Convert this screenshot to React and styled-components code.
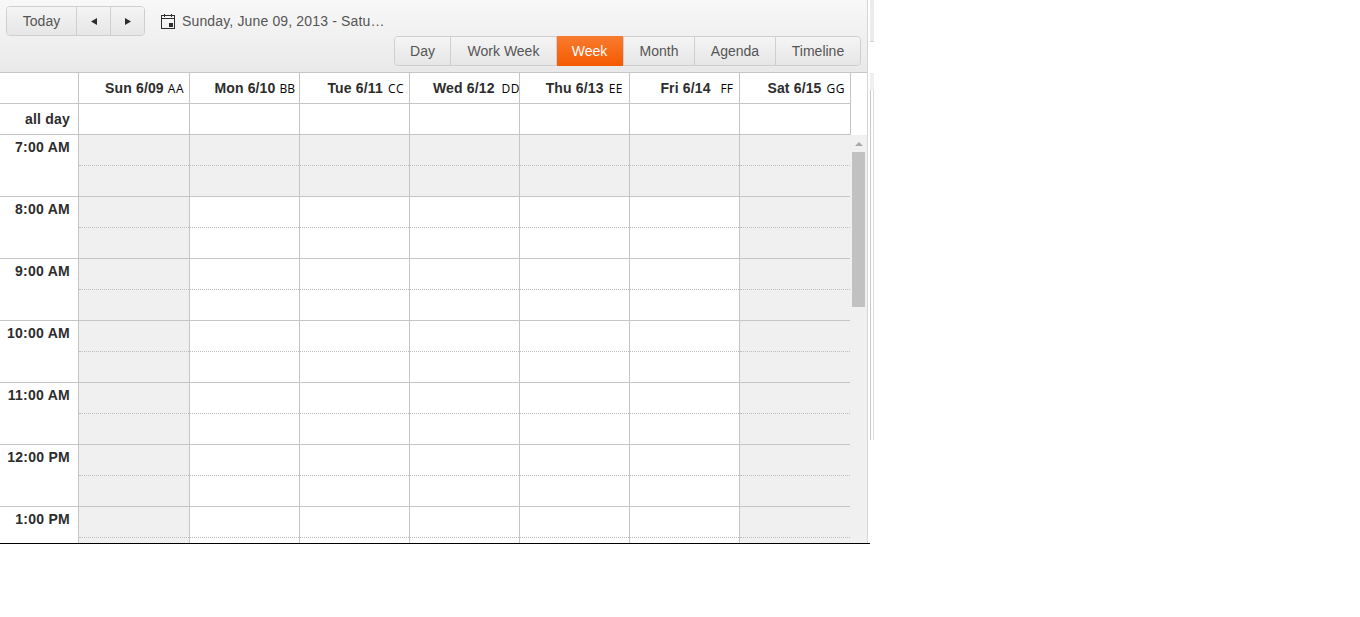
import React from "react";
import styled, { createGlobalStyle } from "styled-components";

const days = [
  { label: "Sun 6/09", res: "AA", pad: 5, gap: 4, track: 0.5 },
  { label: "Mon 6/10", res: "BB", pad: 4, gap: 4, track: 0 },
  { label: "Tue 6/11", res: "CC", pad: 5, gap: 5, track: 0.5 },
  { label: "Wed 6/12", res: "DD", pad: -1, gap: 7, track: 0.5 },
  { label: "Thu 6/13", res: "EE", pad: 6, gap: 5, track: 0.5 },
  { label: "Fri 6/14", res: "FF", pad: 6, gap: 10, track: 0 },
  { label: "Sat 6/15", res: "GG", pad: 5, gap: 5, track: 0.5 },
];
const hours = ["7:00 AM", "8:00 AM", "9:00 AM", "10:00 AM", "11:00 AM", "12:00 PM", "1:00 PM"];
const views = [
  { name: "Day", w: 55 },
  { name: "Work Week", w: 106 },
  { name: "Week", w: 67 },
  { name: "Month", w: 71 },
  { name: "Agenda", w: 81 },
  { name: "Timeline", w: 85 },
];

const CalendarIcon = () => (
  <svg width="15" height="15" viewBox="0 0 15 15" fill="none">
    <rect x="0.5" y="1.5" width="13" height="13" stroke="#2d2d2d" />
    <path d="M1 4.5h12" stroke="#2d2d2d" />
    <path d="M3 0h1v3H3zM10 0h1v3h-1z" fill="#2d2d2d" />
    <path d="M8 9h4v4H8z" fill="#2d2d2d" />
  </svg>
);

const App = () => (
  <Page>
    <GlobalStyle />
    <Column>
      <Scheduler>
        <Toolbar>
          <TopRow>
            <NavGroup>
              <NavButton $w={69}>Today</NavButton>
              <NavButton $w={34}><Arrow viewBox="0 0 6 7"><path d="M6 0v7L0 3.5z" /></Arrow></NavButton>
              <NavButton $w={34}><Arrow viewBox="0 0 6 7"><path d="M0 0v7l6-3.5z" /></Arrow></NavButton>
            </NavGroup>
            <DateRange>
              <CalendarIcon />
              <DateText>Sunday, June 09, 2013 - Satu…</DateText>
            </DateRange>
          </TopRow>
          <ViewGroup>
            {views.map((v) => (
              <ViewButton key={v.name} $w={v.w} $active={v.name === "Week"}>{v.name}</ViewButton>
            ))}
          </ViewGroup>
        </Toolbar>
        <HeaderRow>
          <Corner />
          {days.map((d) => (
            <DayHead key={d.label}>
              <b>{d.label}</b>
              <Res $gap={d.gap} $pad={d.pad} $track={d.track}>{d.res}</Res>
            </DayHead>
          ))}
        </HeaderRow>
        <AllDayRow>
          <AllDayLabel>all day</AllDayLabel>
          {days.map((d) => <AllDayCell key={d.label} />)}
        </AllDayRow>
        <Body>
          <Grid>
            {hours.map((h, i) => (
              <HourRow key={h}>
                <HourLabel>{h}</HourLabel>
                {days.map((d, j) => (
                  <Slot key={d.label} $off={i === 0 || j === 0 || j === 6} />
                ))}
              </HourRow>
            ))}
          </Grid>
          <ScrollBar>
            <ScrollArrow />
            <ScrollThumb />
          </ScrollBar>
        </Body>
      </Scheduler>
      <BottomRule />
    </Column>
    <SideStrip>
      <StripCap />
      <StripGap />
      <StripFill />
      <StripRail />
    </SideStrip>
  </Page>
);

export default App;

const GlobalStyle = createGlobalStyle`
  html, body {
    margin: 0;
    padding: 0;
    background: #fff;
    overflow: hidden;
  }
  body {
    font-family: "Liberation Sans", Arial, sans-serif;
    font-size: 14px;
    color: #2d2d2d;
  }
`;
const Page = styled.div`
  display: flex;
  align-items: flex-start;
  width: 1360px;
  height: 617px;
`;
const Column = styled.div`
  width: 870px;
  flex-shrink: 0;
`;
const Scheduler = styled.div`
  width: 868px;
  height: 543px;
  box-sizing: border-box;
  border-right: 1px solid #d5d5d5;
  overflow: hidden;
  display: flex;
  flex-direction: column;
`;
const BottomRule = styled.div`
  height: 1px;
  background: #000;
`;
const SideStrip = styled.div`
  width: 4px;
  height: 440px;
  display: flex;
  flex-direction: column;
  flex-shrink: 0;
`;
const StripCap = styled.div`
  height: 42px;
  box-sizing: border-box;
  background: #ececec;
  border-bottom: 1px solid #d5d5d5;
`;
const StripGap = styled.div`
  height: 31px;
`;
const StripFill = styled.div`
  height: 17px;
  background: #efefef;
`;
const StripRail = styled.div`
  flex: 1;
  border-left: 1px solid #c8c8c8;
  border-right: 1px solid #dcdcdc;
`;
const Toolbar = styled.div`
  height: 73px;
  box-sizing: border-box;
  border-bottom: 1px solid #c5c5c5;
  background: linear-gradient(to bottom, #f8f8f8, #e9e9e9);
  padding: 6px 6px 0;
  display: flex;
  flex-direction: column;
`;
const TopRow = styled.div`
  display: flex;
  align-items: center;
  height: 30px;
`;
const NavGroup = styled.div`
  display: flex;
  height: 30px;
  box-sizing: border-box;
  border: 1px solid #cfcfcf;
  border-radius: 4px;
  overflow: hidden;
`;
const NavButton = styled.div`
  width: ${(p) => p.$w}px;
  box-sizing: border-box;
  display: flex;
  align-items: center;
  justify-content: center;
  background: linear-gradient(to bottom, #f4f4f4, #e6e6e6);
  color: #555;
  & + & {
    border-left: 1px solid #cfcfcf;
  }
`;
const Arrow = styled.svg`
  width: 6px;
  height: 7px;
  fill: #2d2d2d;
`;
const DateRange = styled.div`
  display: flex;
  align-items: center;
  margin-left: 16px;
  gap: 6px;
`;
const DateText = styled.span`
  color: #555;
  letter-spacing: 0.15px;
  white-space: nowrap;
`;
const ViewGroup = styled.div`
  display: flex;
  align-self: flex-end;
  height: 30px;
  box-sizing: border-box;
  border: 1px solid #cfcfcf;
  border-radius: 4px;
`;
const ViewButton = styled.div`
  width: ${(p) => p.$w}px;
  box-sizing: border-box;
  text-align: center;
  line-height: ${(p) => (p.$active ? "30px" : "28px")};
  color: ${(p) => (p.$active ? "#fff" : "#555")};
  background: ${(p) =>
    p.$active
      ? "linear-gradient(to bottom, #fa7b2f, #f45a00)"
      : "linear-gradient(to bottom, #f4f4f4, #e6e6e6)"};
  margin: ${(p) => (p.$active ? "-1px 0" : "0")};
  padding-right: ${(p) => (p.$active ? "1px" : "0")};
  & + & {
    border-left: 1px solid ${(p) => (p.$active ? "#fa7b2f" : "#cfcfcf")};
  }
  &:first-child {
    border-radius: 3px 0 0 3px;
  }
  &:last-child {
    border-radius: 0 3px 3px 0;
  }
`;
const HeaderRow = styled.div`
  display: flex;
  width: 851px;
  height: 31px;
  box-sizing: border-box;
  border-bottom: 1px solid #c5c5c5;
`;
const Corner = styled.div`
  width: 78px;
  flex-shrink: 0;
`;
const DayHead = styled.div`
  width: 110px;
  box-sizing: border-box;
  flex-shrink: 0;
  display: flex;
  align-items: center;
  justify-content: flex-end;
  border-left: 1px solid #c5c5c5;
  white-space: nowrap;
  &:nth-child(2) {
    width: 111px;
  }
  &:last-child {
    width: 112px;
    border-right: 1px solid #c5c5c5;
  }
  b {
    color: #2d2d2d;
    letter-spacing: 0.15px;
  }
`;
const Res = styled.span`
  margin-left: ${(p) => p.$gap}px;
  margin-right: ${(p) => p.$pad}px;
  font-family: "Open Sans", sans-serif;
  font-size: 12px;
  letter-spacing: ${(p) => p.$track}px;
  color: #000;
`;
const AllDayRow = styled.div`
  display: flex;
  width: 851px;
  height: 31px;
  box-sizing: border-box;
  border-bottom: 1px solid #c5c5c5;
`;
const AllDayLabel = styled.div`
  width: 78px;
  box-sizing: border-box;
  padding-right: 8px;
  flex-shrink: 0;
  text-align: right;
  font-weight: bold;
  letter-spacing: 0.2px;
  line-height: 30px;
`;
const AllDayCell = styled.div`
  width: 110px;
  box-sizing: border-box;
  flex-shrink: 0;
  border-left: 1px solid #c5c5c5;
  &:nth-child(2) {
    width: 111px;
  }
  &:last-child {
    width: 112px;
    border-right: 1px solid #c5c5c5;
  }
`;
const Body = styled.div`
  display: flex;
  flex: 1;
  min-height: 0;
  overflow: hidden;
`;
const Grid = styled.div`
  width: 850px;
  flex-shrink: 0;
`;
const HourRow = styled.div`
  display: flex;
  height: 62px;
  box-sizing: border-box;
  border-bottom: 1px solid #c5c5c5;
`;
const HourLabel = styled.div`
  width: 78px;
  box-sizing: border-box;
  padding: 4px 8px 0 0;
  flex-shrink: 0;
  text-align: right;
  font-weight: bold;
  letter-spacing: 0.25px;
`;
const Slot = styled.div`
  width: 110px;
  flex-shrink: 0;
  box-sizing: border-box;
  border-left: 1px solid #c5c5c5;
  background: ${(p) => (p.$off ? "#f0f0f0" : "#fff")};
  &:nth-child(2),
  &:last-child {
    width: 111px;
  }
  &::after {
    content: "";
    display: block;
    margin-top: 30px;
    border-top: 1px dotted #bdbdbd;
  }
`;
const ScrollBar = styled.div`
  flex: 1;
  background: #f0f0f0;
  position: relative;
`;
const ScrollArrow = styled.div`
  position: absolute;
  left: 5px;
  top: 7px;
  width: 0;
  height: 0;
  border-left: 4px solid transparent;
  border-right: 4px solid transparent;
  border-bottom: 4px solid #a8a8a8;
`;
const ScrollThumb = styled.div`
  position: absolute;
  left: 2px;
  top: 17px;
  width: 13px;
  height: 155px;
  background: #c1c1c1;
`;
